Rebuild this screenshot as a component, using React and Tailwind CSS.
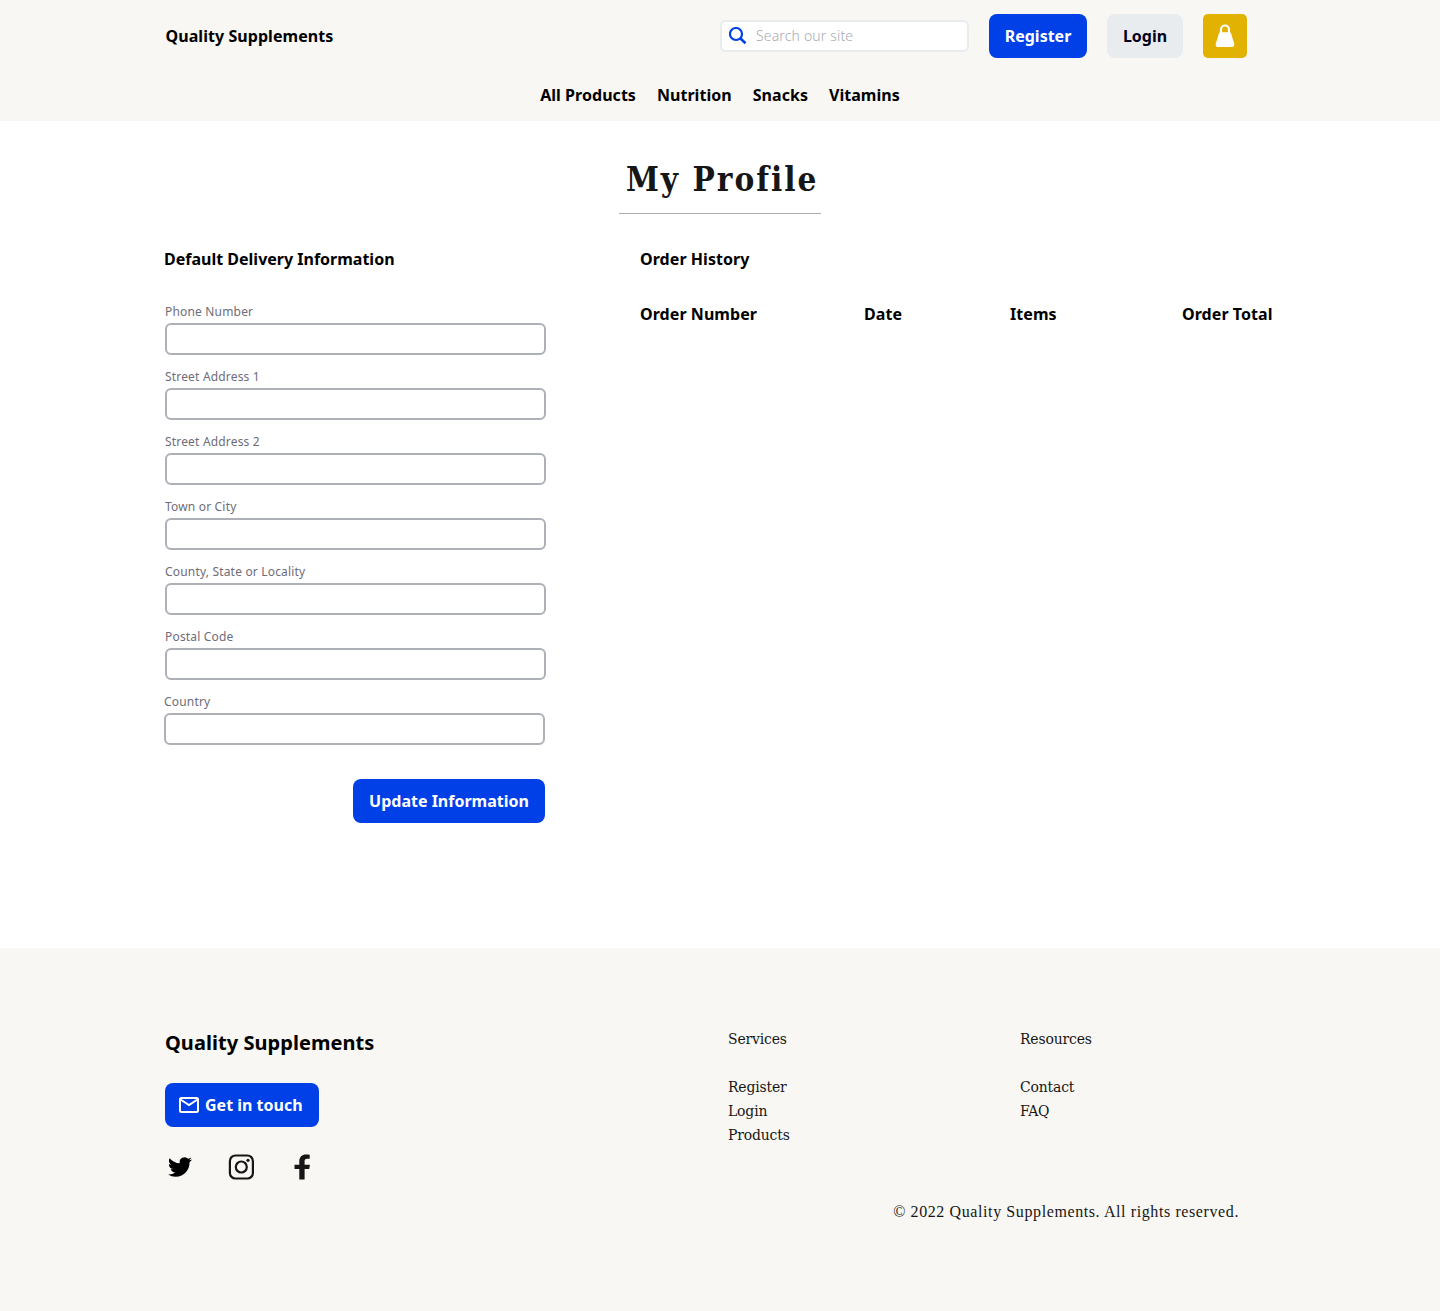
const fields = [
  'Phone Number',
  'Street Address 1',
  'Street Address 2',
  'Town or City',
  'County, State or Locality',
  'Postal Code',
  'Country',
];

function Header() {
  return (
    <header className="h-[121px] bg-[#f8f7f3]">
      <div className="flex h-[72px] items-center pl-[165.5px] pr-[193px]">
        <a className="flex-1 text-base font-bold tracking-[0.06px]">Quality Supplements</a>
        <div className="flex items-center gap-5">
          <div className="flex h-8 w-[249px] items-center rounded-md border-2 border-[#e8ecef] bg-white pl-[7px]">
            <svg className="h-[18px] w-[18px]" viewBox="0 0 18 18" fill="none" stroke="#0040e6" strokeWidth="2.2">
              <circle cx="7" cy="7" r="6" />
              <path d="M11.5 11.5 16.5 16.3" strokeWidth="2.6" />
            </svg>
            <input
              className="ml-[9px] w-48 bg-transparent text-sm font-[350] tracking-[0.16px] outline-none placeholder:text-[#a9abb3]"
              placeholder="Search our site"
            />
          </div>
          <button className="h-11 w-[98px] rounded-lg bg-[#0040e6] font-bold text-white">Register</button>
          <button className="h-11 w-[76px] rounded-lg bg-[#e8ecef] font-bold text-[#04021d]">Login</button>
          <button className="flex h-11 w-11 items-center justify-center rounded-[5px] bg-[#e2b203]">
            <svg className="h-6 w-5" viewBox="0 0 20 24">
              <path d="M6 10V5.500a4 4 0 0 1 8 0v4.500" fill="none" stroke="#fff" strokeWidth="2.200" />
              <path
                d="M5.700 8.200h8.600c.8 0 1.500.5 1.800 1.300l3.100 10.300c.5 1.800-.4 3.200-2.200 3.200H3c-1.800 0-2.700-1.400-2.200-3.200L3.900 9.500c.3-.8 1-1.300 1.800-1.300Z"
                fill="#fff"
              />
            </svg>
          </button>
        </div>
      </div>
      <nav className="flex h-[46px] items-center justify-center gap-[21px] font-bold tracking-[0.04px]">
        <a>All Products</a>
        <a>Nutrition</a>
        <a>Snacks</a>
        <a>Vitamins</a>
      </nav>
    </header>
  );
}

function DeliveryForm() {
  return (
    <section className="w-[382px]">
      <h2 className="h-6 font-bold leading-6">Default Delivery Information</h2>
      <form className="mt-8 flex flex-col">
        {fields.map((label) => (
          <label key={label} className="ml-px block h-[65px] last-of-type:ml-0">
            <span className="block h-5 text-xs leading-[18px] tracking-[0.18px] text-[#6e6d7a]">{label}</span>
            <input className="block h-8 w-[381px] rounded-md border-2 border-[#adb0b7] bg-white px-2 text-sm" />
          </label>
        ))}
        <button className="mr-px mt-[21px] h-11 w-48 self-end rounded-lg bg-[#0040e6] font-bold text-white">
          Update Information
        </button>
      </form>
    </section>
  );
}

function OrderHistory() {
  return (
    <section className="ml-[94px]">
      <h2 className="h-6 font-bold leading-6 tracking-[0.06px]">Order History</h2>
      <table className="mt-[31px] table-fixed border-collapse text-left font-bold leading-6 tracking-[0.06px]">
        <thead>
          <tr>
            <th className="w-[224px]">Order Number</th>
            <th className="w-[146px]">Date</th>
            <th className="w-[172px]">Items</th>
            <th className="w-[100px]">Order Total</th>
          </tr>
        </thead>
      </table>
    </section>
  );
}

function Footer() {
  return (
    <footer className="h-[363px] bg-[#f8f7f3] pl-[165px] pr-[201px] pt-[79px] text-[#161616]">
      <div className="flex h-[173px]">
        <div className="w-[563px]">
          <h2 className="h-8 text-xl font-bold leading-8 tracking-[0.05px] text-black">Quality Supplements</h2>
          <button className="mt-6 flex h-11 w-[154px] items-center rounded-lg bg-[#0040e6] pl-3.5 font-bold text-white">
            <svg className="mr-1.5 h-4 w-5" viewBox="0 0 20 16" fill="none" stroke="#fff" strokeWidth="2">
              <rect x="1" y="1" width="18" height="14" rx="1.5" />
              <path d="m1.500 2.500 8.500 5.500 8.500-5.500" />
            </svg>
            Get in touch
          </button>
          <div className="mt-[27px] flex h-[26px] items-center">
            <svg className="ml-[3px] h-6 w-6" viewBox="0 0 24 24" fill="#000">
              <path d="M23.953 4.570a10 10 0 0 1-2.825.775 4.958 4.958 0 0 0 2.163-2.723c-.951.555-2.005.959-3.127 1.184a4.920 4.920 0 0 0-8.384 4.482C7.690 8.095 4.067 6.130 1.640 3.162a4.822 4.822 0 0 0-.666 2.475c0 1.710.870 3.213 2.188 4.096a4.904 4.904 0 0 1-2.228-.616v.060a4.923 4.923 0 0 0 3.946 4.827 4.996 4.996 0 0 1-2.212.085 4.936 4.936 0 0 0 4.604 3.417 9.867 9.867 0 0 1-6.102 2.105c-.390 0-.779-.023-1.170-.067a13.995 13.995 0 0 0 7.557 2.209c9.053 0 13.998-7.496 13.998-13.985 0-.210 0-.420-.015-.630A9.935 9.935 0 0 0 24 4.590Z" />
            </svg>
            <svg className="ml-9 h-[26px] w-[26px]" viewBox="0 0 26 26" fill="none" stroke="#161616" strokeWidth="2.200">
              <rect x="1.900" y="1.500" width="23" height="23" rx="5.500" />
              <circle cx="13.300" cy="13" r="5.500" />
              <circle cx="20" cy="6.300" r="1.600" fill="#161616" stroke="none" />
            </svg>
            <svg className="ml-10 h-[26px] w-4" viewBox="0 0 16 26" fill="#161616">
              <path d="M5.300 25.500V15H.5v-4.300h4.800V7.500C5.300 2.700 8 .5 12 .5c1.600 0 3 .1 3.700.2v4h-2.500c-2 0-2.600 1-2.600 2.500v3.500h5.300L15.200 15h-4.600v10.500Z" />
            </svg>
          </div>
        </div>
        <div className="w-[292px] font-['DejaVu_Serif_Condensed','DejaVu_Serif',serif] text-[15.500px] leading-6 tracking-[-0.15px]">
          <h3>Services</h3>
          <ul className="mt-6">
            <li>Register</li>
            <li>Login</li>
            <li>Products</li>
          </ul>
        </div>
        <div className="font-['DejaVu_Serif_Condensed','DejaVu_Serif',serif] text-[15.500px] leading-6 tracking-[-0.15px]">
          <h3>Resources</h3>
          <ul className="mt-6">
            <li>Contact</li>
            <li>FAQ</li>
          </ul>
        </div>
      </div>
      <p className="whitespace-nowrap text-right font-['Liberation_Serif',serif] text-base leading-6 tracking-[0.6px]">
        © 2022 Quality Supplements. All rights reserved.
      </p>
    </footer>
  );
}

export default function App() {
  return (
    <div className="h-[1311px] w-[1440px] bg-white font-['Noto_Sans',sans-serif] text-base text-black">
      <Header />
      <main className="h-[827px] pt-[33px]">
        <h1 className="mx-auto h-[60px] w-[202px] whitespace-nowrap border-b border-[#adb0b1] pl-[7px] font-['DejaVu_Serif_Condensed','DejaVu_Serif',serif] text-[33px] font-bold leading-[51px] tracking-[2px] text-[#161616]">
          My Profile
        </h1>
        <div className="mt-[33px] flex pl-[164px]">
          <DeliveryForm />
          <OrderHistory />
        </div>
      </main>
      <Footer />
    </div>
  );
}
